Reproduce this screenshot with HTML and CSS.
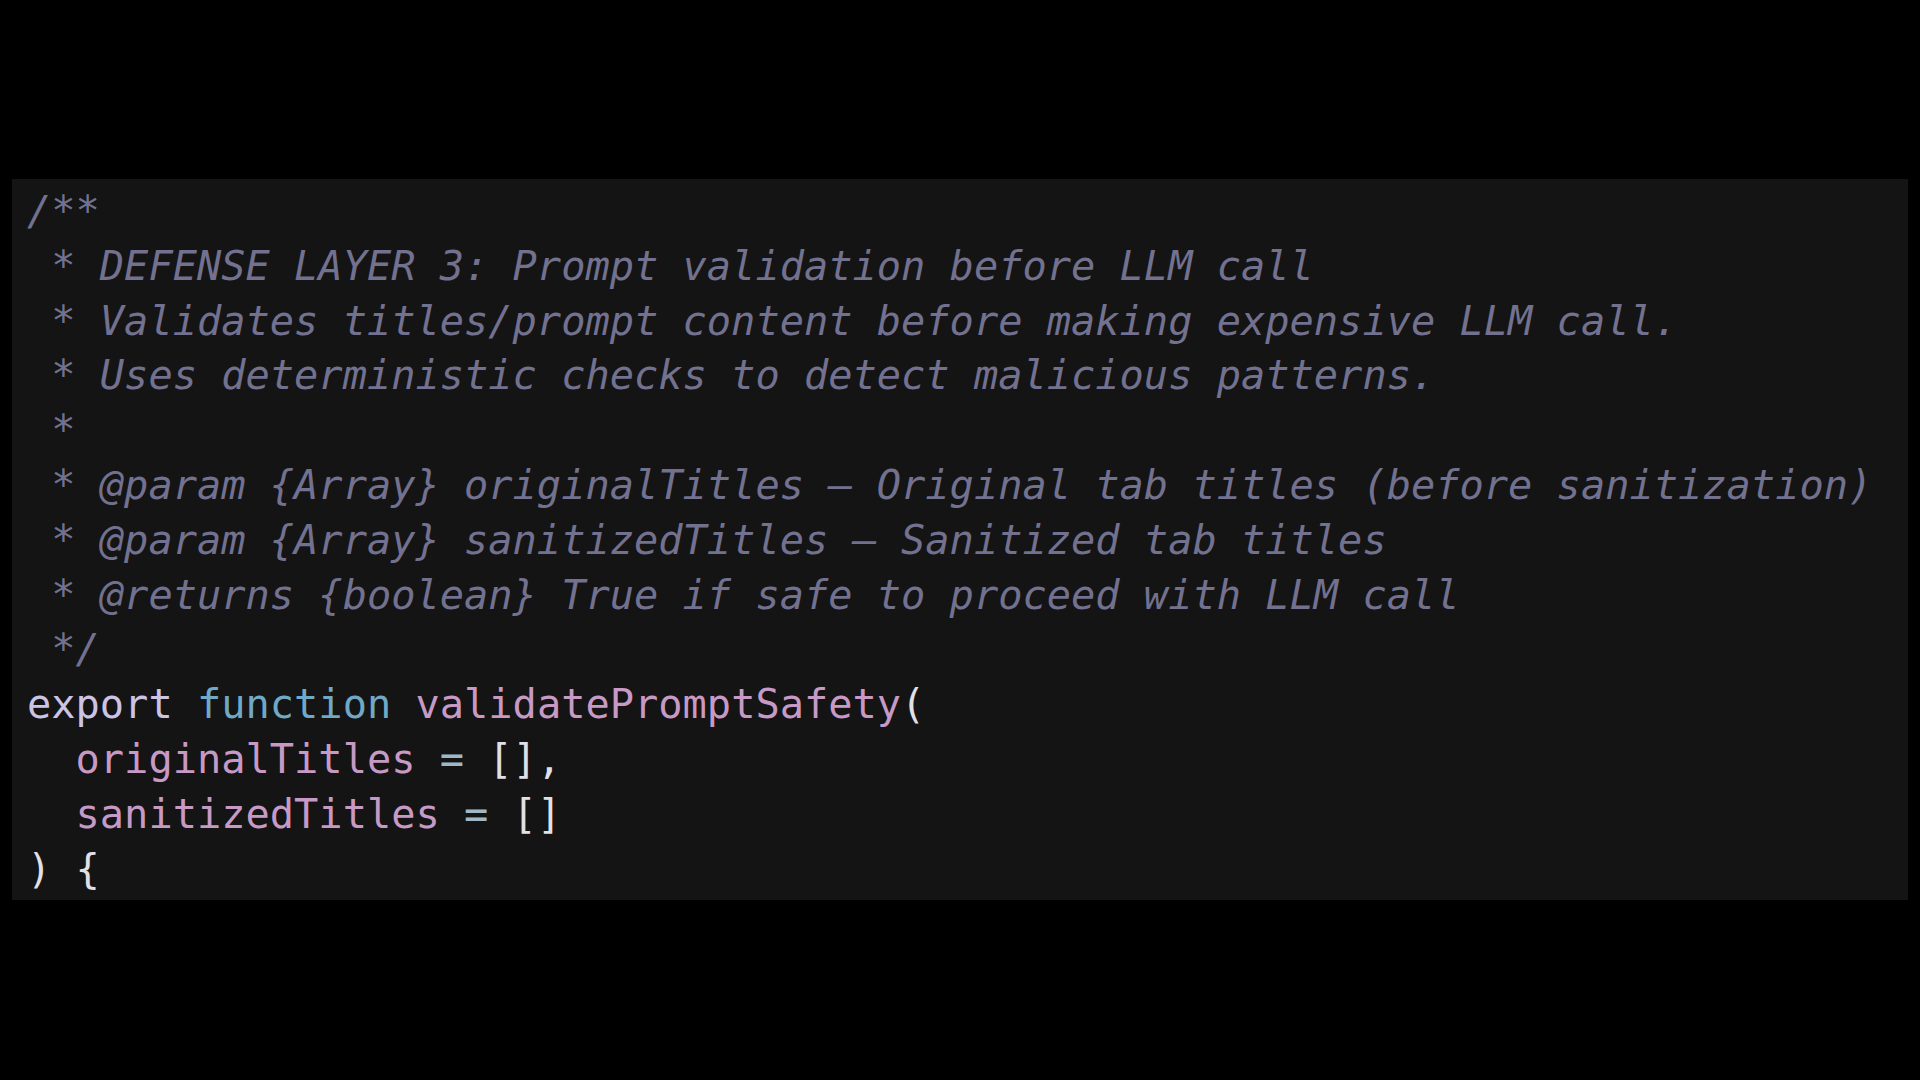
FILE: index.html
```html
<!DOCTYPE html>
<html>
<head>
<meta charset="utf-8">
<link rel="stylesheet" href="styles.css">
</head>
<body>
<main class="stage">
<pre class="code"><span class="c">/**
 * DEFENSE LAYER 3: Prompt validation before LLM call
 * Validates titles/prompt content before making expensive LLM call.
 * Uses deterministic checks to detect malicious patterns.
 *
 * @param {Array} originalTitles – Original tab titles (before sanitization)
 * @param {Array} sanitizedTitles – Sanitized tab titles
 * @returns {boolean} True if safe to proceed with LLM call
 */</span>
<span class="kw">export</span> <span class="fn">function</span> <span class="nm">validatePromptSafety</span><span class="p">(</span>
  <span class="nm">originalTitles</span> <span class="op">=</span> <span class="p">[],</span>
  <span class="nm">sanitizedTitles</span> <span class="op">=</span> <span class="p">[]</span>
<span class="p">) {</span></pre>
</main>
</body>
</html>
```
FILE: styles.css
```css
html, body {
  margin: 0;
  padding: 0;
  background: #000;
  width: 1920px;
  height: 1080px;
  overflow: hidden;
}
.stage {
  padding: 179px 12px 0 12px;
}
.code {
  margin: 0;
  background: #141414;
  height: 721px;
  box-sizing: border-box;
  padding: 6px 0 0 15px;
  font-family: "DejaVu Sans Mono", monospace;
  font-size: 40.35px;
  line-height: 54.8px;
  color: #e2e0e6;
  white-space: pre;
}
.c { color: #72718f; font-style: italic; }
.kw { color: #cbc4e4; }
.fn { color: #6fa9c7; }
.nm { color: #c79ac6; }
.op { color: #9fb7c6; }
.p { color: #e2e0e6; }
```
